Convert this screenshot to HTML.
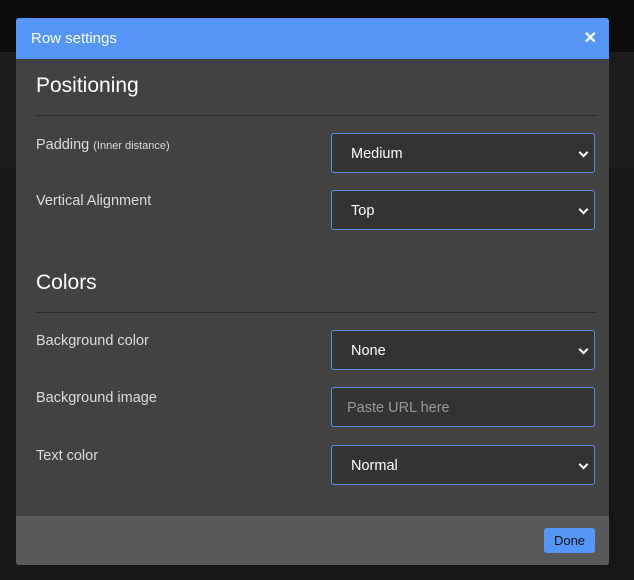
<!DOCTYPE html>
<html><head><meta charset="utf-8"><style>
*{box-sizing:border-box;margin:0;padding:0}
body{width:634px;height:580px;background:#161616;font-family:"Liberation Sans",sans-serif;position:relative;overflow:hidden}
.bg1{position:absolute;left:0;top:0;width:634px;height:52px;background:#0c0c0c}
.bg2{position:absolute;left:0;top:52px;width:634px;height:116px;background:#1c1c1c}
.modal{position:absolute;left:16px;top:18px;width:593px;height:547px;background:#424242;border-radius:3px;overflow:hidden}
.hd{height:41px;background:#5596f7;color:#fff;font-size:15px;line-height:41px;padding-left:15px;position:relative}
.hd .x{position:absolute;right:12px;top:0;font-weight:bold;font-size:16px}
h2{position:absolute;left:20px;color:#fff;font-weight:normal;font-size:21px}
.hr{position:absolute;left:20px;width:561px;height:1px;background:#2c2c2c}
.lbl{position:absolute;left:20px;color:#ddd;font-size:14.5px}
.lbl small{font-size:11px}
.sel{position:absolute;left:315px;width:264px;height:40px;background:#333;border:1px solid #5b8ee0;border-radius:3px;color:#fff;font-size:14.5px;line-height:40px;padding-left:19px}
.sel.ch::after{content:"";position:absolute;right:7px;top:15px;width:5px;height:5px;border-right:2px solid #fff;border-bottom:2px solid #fff;transform:rotate(45deg)}
.sel.in{padding-left:15px;color:#999}
.ft{position:absolute;left:0;top:498px;width:593px;height:49px;background:#595959}
.btn{position:absolute;right:14px;top:12px;width:51px;height:25px;background:#5596f7;border-radius:3px;color:#111;font-size:13px;text-align:center;line-height:26px}
</style></head><body>
<div class="bg1"></div><div class="bg2"></div>
<div class="modal">
<div class="hd">Row settings<span class="x">✕</span></div>
<h2 style="top:56px">Positioning</h2>
<div class="hr" style="top:97px"></div>
<div class="lbl" style="top:119px">Padding <small>(Inner distance)</small></div>
<div class="sel ch" style="top:115px">Medium</div>
<div class="lbl" style="top:175px">Vertical Alignment</div>
<div class="sel ch" style="top:172px">Top</div>
<h2 style="top:253px">Colors</h2>
<div class="hr" style="top:294px"></div>
<div class="lbl" style="top:315px">Background color</div>
<div class="sel ch" style="top:312px">None</div>
<div class="lbl" style="top:372px">Background image</div>
<div class="sel in" style="top:369px">Paste URL here</div>
<div class="lbl" style="top:430px">Text color</div>
<div class="sel ch" style="top:427px">Normal</div>
<div class="ft"><div class="btn">Done</div></div>
</div>
</body></html>
